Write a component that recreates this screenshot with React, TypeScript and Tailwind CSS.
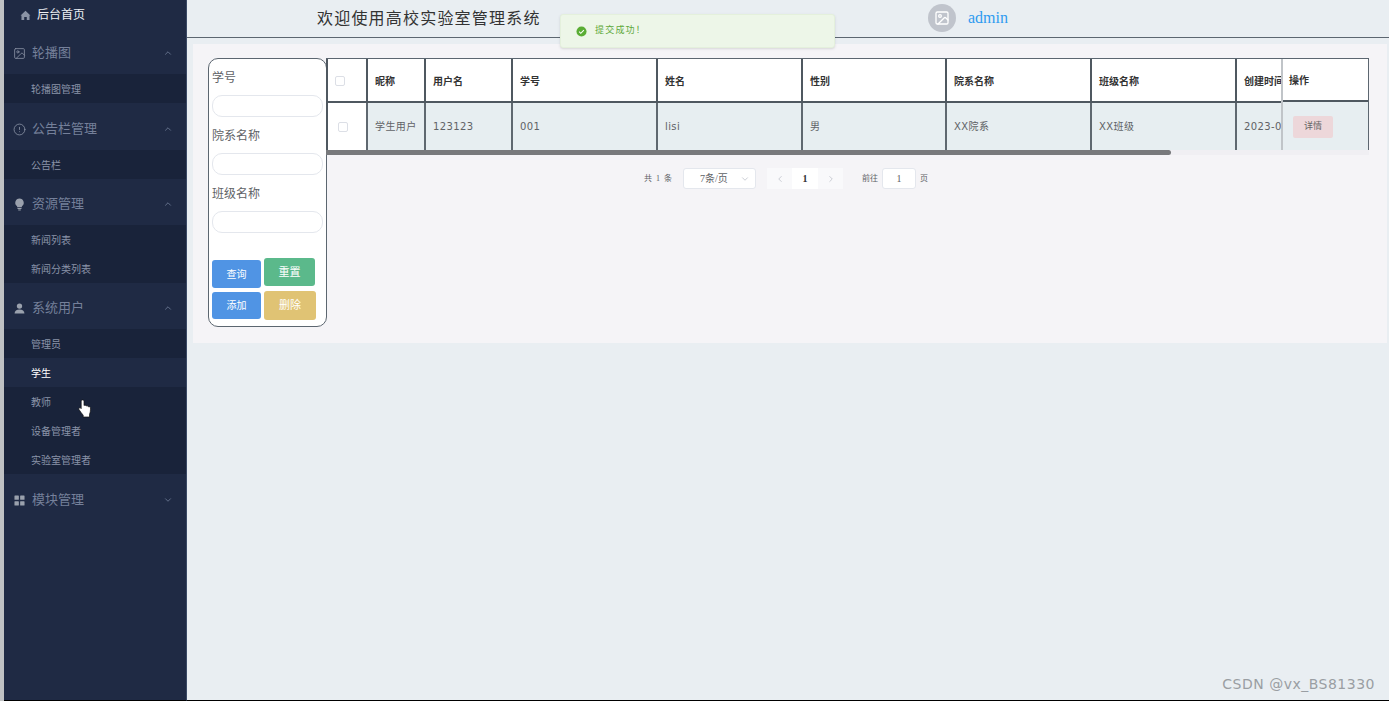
import { ChevronDown, ChevronLeft, ChevronRight, ChevronUp, CircleAlert, Image } from "lucide-react"
import type { ReactNode } from "react"

const HomeIcon = () => (
  <svg viewBox="0 0 12 12" className="w-[11px] h-[11px]" fill="#8a93a5">
    <path d="M6 .8 11.4 6 10.4 6V11H7.4V7.6H4.6V11H1.6V6H.6Z" />
  </svg>
)
const BulbIcon = () => (
  <svg viewBox="0 0 12 14" className="w-[11px] h-[13px]" fill="#9aa1ad">
    <path d="M6 .5a4.600 4.600 0 0 1 2.600 8.400V10H3.400V8.900A4.600 4.600 0 0 1 6 .5Z" />
    <rect x="3.800" y="10.800" width="4.400" height="1.100" />
    <rect x="4.600" y="12.400" width="2.800" height="1.100" />
  </svg>
)
const UserIcon = () => (
  <svg viewBox="0 0 12 12" className="w-[11px] h-[11px]" fill="#9aa1ad">
    <circle cx="6" cy="3.400" r="2.900" />
    <path d="M.6 11.400C.8 8.400 2.600 7 6 7s5.200 1.400 5.400 4.400Z" />
  </svg>
)
const GridIcon = () => (
  <svg viewBox="0 0 12 12" className="w-[11px] h-[11px]" fill="#9aa1ad">
    <rect x="0.5" y="0.5" width="4.800" height="4.800" rx="0.6" />
    <rect x="6.700" y="0.5" width="4.800" height="4.800" rx="0.6" />
    <rect x="0.5" y="6.700" width="4.800" height="4.800" rx="0.6" />
    <rect x="6.700" y="6.700" width="4.800" height="4.800" rx="0.6" />
  </svg>
)

const MenuHead = ({
  icon,
  label,
  open = true,
  size = "h-[46px] pt-[4px]",
}: {
  icon: ReactNode
  label: string
  open?: boolean
  size?: string
}) => (
  <div className={`${size} flex items-center pl-[10px] pr-[13px] text-[13px] text-[#75809a]`}>
    <span className="w-[11px] flex justify-center">{icon}</span>
    <span className="ml-[7px] flex-1">{label}</span>
    {open ? <ChevronUp size={10} color="#6f7c96" /> : <ChevronDown size={10} color="#6f7c96" />}
  </div>
)

const SubItem = ({ label, active }: { label: string; active?: boolean }) => (
  <div
    className={`h-[29px] pt-[2px] flex items-center pl-[27px] text-[10px] ${
      active ? "bg-[#1f2a44] text-white" : "bg-[#19233a] text-[#8a93a8]"
    }`}
  >
    {label}
  </div>
)

const Sidebar = () => (
  <aside className="w-[187px] shrink-0 flex">
    <div className="w-[4px] bg-[#bfc1c3]" />
    <div className="flex-1 bg-[#1f2a44] border-r border-[#3b4a66] border-b-1 border-b-black">
      <div className="h-[30px] flex items-center pl-[16px] text-[12px] text-[#eef0f4]">
        <HomeIcon />
        <span className="ml-[6px]">后台首页</span>
      </div>
      <MenuHead icon={<Image size={13} strokeWidth={1.5} color="#8a93a5" className="shrink-0" />} label="轮播图" size="h-[44px] pt-[2px]" />
      <SubItem label="轮播图管理" />
      <MenuHead icon={<CircleAlert size={13} strokeWidth={1.5} color="#8a93a5" className="shrink-0" />} label="公告栏管理" size="h-[47px] pt-[5px]" />
      <SubItem label="公告栏" />
      <MenuHead icon={<BulbIcon />} label="资源管理" />
      <SubItem label="新闻列表" />
      <SubItem label="新闻分类列表" />
      <MenuHead icon={<UserIcon />} label="系统用户" />
      <SubItem label="管理员" />
      <SubItem label="学生" active />
      <SubItem label="教师" />
      <SubItem label="设备管理者" />
      <SubItem label="实验室管理者" />
      <MenuHead icon={<GridIcon />} label="模块管理" open={false} size="h-[46px] pt-[6px]" />
    </div>
  </aside>
)

const Header = () => (
  <header className="h-[38px] shrink-0 flex items-center bg-[#e9eef2] border-b border-[#5c6670]">
    <h1 className="ml-[130px] w-[611px] text-[16px] tracking-[1.2px] font-normal text-[#333] font-['Liberation_Serif','Noto_Sans_CJK_SC',serif]">
      欢迎使用高校实验室管理系统
    </h1>
    <div className="w-[28px] h-[28px] -mt-[2px] rounded-full bg-[#c0c4cc] flex items-center justify-center">
      <Image size={16} color="#fff" />
    </div>
    <span className="ml-[12px] -mt-[2px] text-[16px] text-[#2f9bf0] font-['Liberation_Serif',serif]">admin</span>
  </header>
)

const Field = ({ label }: { label: string }) => (
  <div>
    <div className="h-[36px] pt-[2px] flex items-center text-[12px] text-[#606266]">{label}</div>
    <div className="h-[22px] rounded-[10px] bg-white border border-[#e4e7ed]" />
  </div>
)

const SearchPanel = () => (
  <div className="w-[119px] h-[269px] mt-[14px] shrink-0 rounded-[10px] border border-[#5c6670] bg-white px-[3px]">
    <Field label="学号" />
    <Field label="院系名称" />
    <Field label="班级名称" />
    <div className="mt-[25px] flex gap-[3px]">
      <div className="flex flex-col gap-[4px] mt-[2px]">
        <button className="w-[49px] h-[28px] rounded-[3px] bg-[#5094e4] text-[10px] text-white">查询</button>
        <button className="w-[49px] h-[27px] rounded-[3px] bg-[#5094e4] text-[10px] text-white">添加</button>
      </div>
      <div className="flex flex-col gap-[5px]">
        <button className="w-[51px] h-[28px] rounded-[3px] bg-[#5bb98b] text-[11px] text-white">重置</button>
        <button className="w-[52px] h-[29px] rounded-[3px] bg-[#e0c374] text-[11px] text-white">删除</button>
      </div>
    </div>
  </div>
)

const columns = [
  { label: "昵称", width: "w-[58px]", value: "学生用户" },
  { label: "用户名", width: "w-[87px]", value: "123123" },
  { label: "学号", width: "w-[145px]", value: "001" },
  { label: "姓名", width: "w-[145px]", value: "lisi" },
  { label: "性别", width: "w-[144px]", value: "男" },
  { label: "院系名称", width: "w-[145px]", value: "XX院系" },
  { label: "班级名称", width: "w-[145px]", value: "XX班级" },
  { label: "创建时间", width: "w-[80px]", value: "2023-03-07" },
]

const Checkbox = () => <span className="block w-[10px] h-[10px] rounded-[2px] border border-[#dcdfe6] bg-white" />

const DataTable = () => (
  <div className="flex-1 min-w-0 -ml-[1px] mt-[14px] pr-[18px]">
    <div className="flex border-t border-r border-[#5c6670]">
      <div className="flex-1 min-w-0 overflow-hidden">
        <table className="table-fixed border-collapse w-[949px]">
          <thead>
            <tr className="h-[43px] bg-white border-b-2 border-[#4f5860]">
              <th className="w-[40px] border-l-2 border-[#4f5860] pl-[7px] pt-[2px]">
                <Checkbox />
              </th>
              {columns.map((col) => (
                <th
                  key={col.label}
                  className={`${col.width} border-l-2 border-[#4f5860] px-[7px] pt-[2px] text-left text-[10px] font-bold text-[#333] whitespace-nowrap overflow-hidden`}
                >
                  {col.label}
                </th>
              ))}
            </tr>
          </thead>
          <tbody>
            <tr className="h-[48px]">
              <td className="bg-white border-l-2 border-[#4f5860] pl-[10px]">
                <Checkbox />
              </td>
              {columns.map((col) => (
                <td
                  key={col.label}
                  className="bg-[#e7eef1] border-l-2 border-[#5f6870] px-[7px] text-[10px] text-[#606266] whitespace-nowrap overflow-hidden tracking-[0.4px] font-['DejaVu_Sans','Noto_Sans_CJK_SC',sans-serif]"
                >
                  {col.value}
                </td>
              ))}
            </tr>
          </tbody>
        </table>
      </div>
      <div className="w-[87px] shrink-0 border-l-2 border-[#c0c4c8]">
        <div className="h-[43px] bg-white border-b-2 border-[#4f5860] flex items-center pl-[6px] pt-[2px] text-[10px] font-bold text-[#333]">
          操作
        </div>
        <div className="h-[48px] bg-[#e7eef1] flex items-center pl-[10px]">
          <span className="w-[40px] h-[22px] mt-[1px] rounded-[2px] bg-[#edd7da] flex items-center justify-center text-[9px] text-[#666]">
            详情
          </span>
        </div>
      </div>
    </div>
    <div className="h-[5px] bg-[#f0eff3]">
      <div className="h-full w-[845px] rounded-r-[3px] bg-[#78797c]" />
    </div>
    <Pagination />
  </div>
)

const Pagination = () => (
  <div className="mt-[13px] h-[21px] flex items-center pl-[318px] text-[8px] text-[#606266] font-['Liberation_Serif','Noto_Sans_CJK_SC',serif]">
    <span className="tracking-[1px]">共 1 条</span>
    <span className="ml-[10px] w-[73px] h-[21px] rounded-[3px] border border-[#e4e7ed] bg-white flex items-center pl-[16px] pr-[5px] text-[10px]">
      <span className="flex-1">7条/页</span>
      <ChevronDown size={10} color="#c0c4cc" />
    </span>
    <span className="ml-[11px] w-[25px] h-[21px] bg-[#f9f9fb] flex items-center justify-center">
      <ChevronLeft size={10} color="#c0c4cc" />
    </span>
    <span className="w-[26px] h-[21px] bg-white flex items-center justify-center text-[10px] font-bold text-[#303133]">1</span>
    <span className="w-[25px] h-[21px] bg-[#f9f9fb] flex items-center justify-center">
      <ChevronRight size={10} color="#c0c4cc" />
    </span>
    <span className="ml-[19px]">前往</span>
    <span className="ml-[4px] w-[34px] h-[21px] rounded-[3px] border border-[#e4e7ed] bg-white flex items-center justify-center text-[10px]">1</span>
    <span className="ml-[4px]">页</span>
  </div>
)

const HandCursor = () => (
  <svg viewBox="0 0 14 19" className="absolute left-[78px] top-[399px] w-[14px] h-[19px]">
    <path
      d="M3.200 2c0-1.400 2.800-1.400 2.800 0V6.500c1-.6 2-.3 2.200.5 1-.5 2-.1 2.100.8 1-.4 2.200.1 2.200 1.200 0 2.600-.2 4.600-1 6.300V18H5.200v-1.800C3.800 14.500 2.300 12.600 1 10.600.3 9.400 1.600 8.200 2.600 9L3.200 9.600Z"
      fill="#fff"
      stroke="#111"
      strokeWidth="0.7"
    />
  </svg>
)

const Toast = () => (
  <div className="absolute left-[560px] top-[14px] w-[275px] h-[34px] rounded-[3px] bg-[#edf6e8] border border-[#e4f0dc] flex items-center pl-[15px] text-[9px] tracking-[1.2px] text-[#5da83a] font-['Liberation_Serif','Noto_Sans_CJK_SC',serif] shadow-sm">
    <svg viewBox="0 0 12 12" className="w-[11px] h-[11px] mr-[8px]">
      <circle cx="6" cy="6" r="5.500" fill="#5aad34" />
      <path d="M3.400 6.200 5.200 8l3.400-3.500" fill="none" stroke="#fff" strokeWidth="1.100" />
    </svg>
    提交成功！
  </div>
)

export default function App() {
  return (
    <div className="relative w-[1389px] h-[701px] flex overflow-hidden bg-[#e9eef2] font-['Liberation_Sans','Noto_Sans_CJK_SC',sans-serif]">
      <Sidebar />
      <div className="flex-1 min-w-0 flex flex-col border-b border-black">
        <Header />
        <main className="ml-[6px] mr-[2px] mt-[6px] h-[299px] bg-[#f5f4f7] pl-[15px] flex items-start">
          <SearchPanel />
          <DataTable />
        </main>
        <div className="flex-1 flex items-end justify-end pr-[14px] pb-[5px]">
          <span className="text-[14px] tracking-[0.5px] text-[#9a9ea3] font-['DejaVu_Sans',sans-serif]">CSDN @vx_BS81330</span>
        </div>
      </div>
      <Toast />
      <HandCursor />
    </div>
  )
}
